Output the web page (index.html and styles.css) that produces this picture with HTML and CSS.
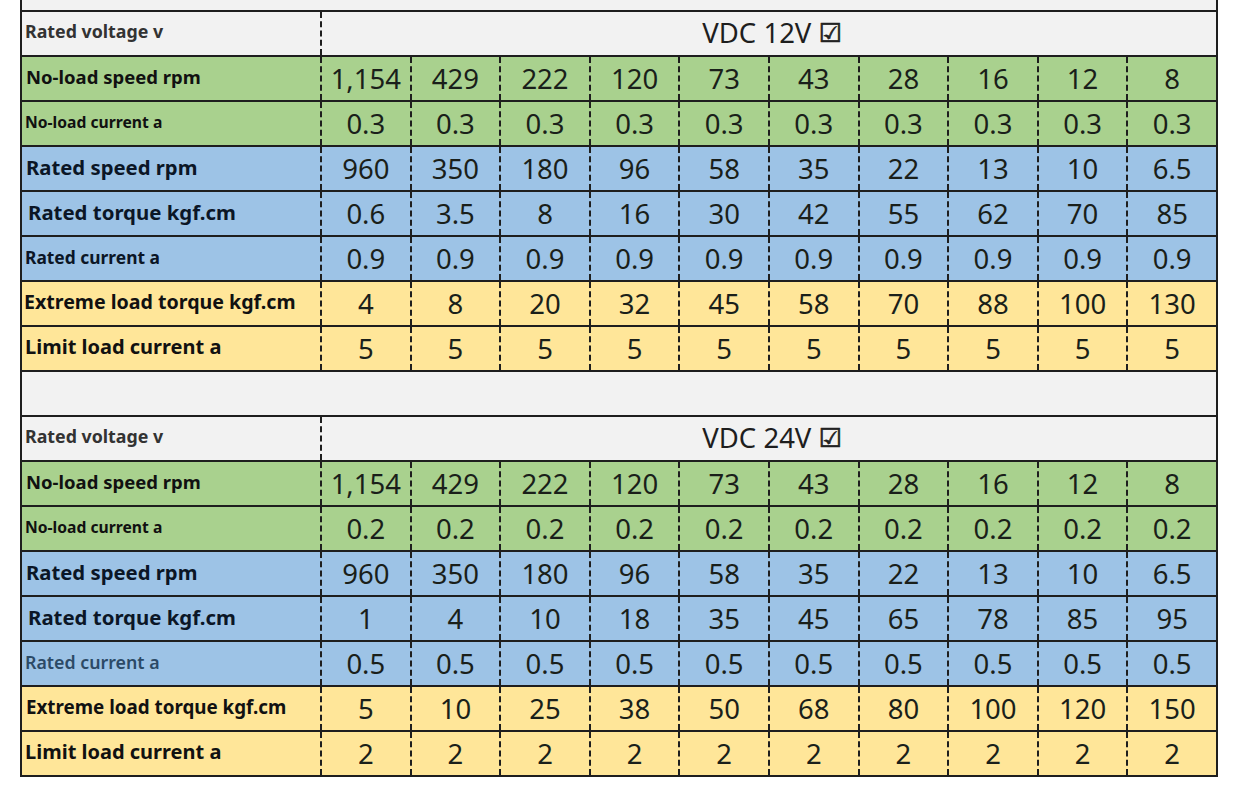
FILE: index.html
```html
<!DOCTYPE html>
<html>
<head>
<meta charset="utf-8">
<link rel="stylesheet" href="styles.css">
</head>
<body>
<div class="sheet">
  <div class="strip"></div>

  <div class="row gray"><div class="label l-volt">Rated voltage v</div><div class="span">VDC 12V <span class="chk">☑</span></div></div>
  <div class="row green"><div class="label l-nls">No-load speed rpm</div><div class="v">1,154</div><div class="v">429</div><div class="v">222</div><div class="v">120</div><div class="v">73</div><div class="v">43</div><div class="v">28</div><div class="v">16</div><div class="v">12</div><div class="v">8</div></div>
  <div class="row green"><div class="label l-nlc">No-load current a</div><div class="v">0.3</div><div class="v">0.3</div><div class="v">0.3</div><div class="v">0.3</div><div class="v">0.3</div><div class="v">0.3</div><div class="v">0.3</div><div class="v">0.3</div><div class="v">0.3</div><div class="v">0.3</div></div>
  <div class="row blue"><div class="label l-rs">Rated speed rpm</div><div class="v">960</div><div class="v">350</div><div class="v">180</div><div class="v">96</div><div class="v">58</div><div class="v">35</div><div class="v">22</div><div class="v">13</div><div class="v">10</div><div class="v">6.5</div></div>
  <div class="row blue"><div class="label l-rt">Rated torque kgf.cm</div><div class="v">0.6</div><div class="v">3.5</div><div class="v">8</div><div class="v">16</div><div class="v">30</div><div class="v">42</div><div class="v">55</div><div class="v">62</div><div class="v">70</div><div class="v">85</div></div>
  <div class="row blue"><div class="label l-rc">Rated current a</div><div class="v">0.9</div><div class="v">0.9</div><div class="v">0.9</div><div class="v">0.9</div><div class="v">0.9</div><div class="v">0.9</div><div class="v">0.9</div><div class="v">0.9</div><div class="v">0.9</div><div class="v">0.9</div></div>
  <div class="row yellow"><div class="label l-ex">Extreme load torque kgf.cm</div><div class="v">4</div><div class="v">8</div><div class="v">20</div><div class="v">32</div><div class="v">45</div><div class="v">58</div><div class="v">70</div><div class="v">88</div><div class="v">100</div><div class="v">130</div></div>
  <div class="row yellow"><div class="label l-lim">Limit load current a</div><div class="v">5</div><div class="v">5</div><div class="v">5</div><div class="v">5</div><div class="v">5</div><div class="v">5</div><div class="v">5</div><div class="v">5</div><div class="v">5</div><div class="v">5</div></div>

  <div class="row gray blank"></div>

  <div class="row gray"><div class="label l-volt">Rated voltage v</div><div class="span">VDC 24V <span class="chk">☑</span></div></div>
  <div class="row green"><div class="label l-nls">No-load speed rpm</div><div class="v">1,154</div><div class="v">429</div><div class="v">222</div><div class="v">120</div><div class="v">73</div><div class="v">43</div><div class="v">28</div><div class="v">16</div><div class="v">12</div><div class="v">8</div></div>
  <div class="row green"><div class="label l-nlc">No-load current a</div><div class="v">0.2</div><div class="v">0.2</div><div class="v">0.2</div><div class="v">0.2</div><div class="v">0.2</div><div class="v">0.2</div><div class="v">0.2</div><div class="v">0.2</div><div class="v">0.2</div><div class="v">0.2</div></div>
  <div class="row blue"><div class="label l-rs">Rated speed rpm</div><div class="v">960</div><div class="v">350</div><div class="v">180</div><div class="v">96</div><div class="v">58</div><div class="v">35</div><div class="v">22</div><div class="v">13</div><div class="v">10</div><div class="v">6.5</div></div>
  <div class="row blue"><div class="label l-rt">Rated torque kgf.cm</div><div class="v">1</div><div class="v">4</div><div class="v">10</div><div class="v">18</div><div class="v">35</div><div class="v">45</div><div class="v">65</div><div class="v">78</div><div class="v">85</div><div class="v">95</div></div>
  <div class="row blue"><div class="label l-rc light">Rated current a</div><div class="v">0.5</div><div class="v">0.5</div><div class="v">0.5</div><div class="v">0.5</div><div class="v">0.5</div><div class="v">0.5</div><div class="v">0.5</div><div class="v">0.5</div><div class="v">0.5</div><div class="v">0.5</div></div>
  <div class="row yellow"><div class="label l-ex2">Extreme load torque kgf.cm</div><div class="v">5</div><div class="v">10</div><div class="v">25</div><div class="v">38</div><div class="v">50</div><div class="v">68</div><div class="v">80</div><div class="v">100</div><div class="v">120</div><div class="v">150</div></div>
  <div class="row yellow"><div class="label l-lim">Limit load current a</div><div class="v">2</div><div class="v">2</div><div class="v">2</div><div class="v">2</div><div class="v">2</div><div class="v">2</div><div class="v">2</div><div class="v">2</div><div class="v">2</div><div class="v">2</div></div>
</div>
</body>
</html>
```

FILE: styles.css
```css
html, body {
  margin: 0;
  padding: 0;
  background: #ffffff;
}

.sheet {
  margin-left: 20px;
  width: 1198px;
  box-sizing: border-box;
  border-left: 2px solid #1e1e1e;
  border-right: 2px solid #1e1e1e;
  font-family: "Noto Sans", "Open Sans", sans-serif;
}

.strip {
  height: 10px;
  background: #f2f2f2;
  border-bottom: 2px solid #1e1e1e;
}

.row {
  display: grid;
  grid-template-columns: 298px repeat(10, 1fr);
  height: 45px;
  box-sizing: border-box;
  border-bottom: 2px solid #1e1e1e;
}

.gray { background: #f2f2f2; }
.green { background: #a9d18e; }
.blue { background: #9dc3e6; }
.yellow { background: #ffe699; }

.blank { display: block; }

.label {
  display: flex;
  align-items: center;
  padding-left: 3px;
  padding-bottom: 3px;
  font-weight: 700;
  color: #111111;
  white-space: nowrap;
}

.l-volt { font-size: 17.8px; color: #333333; padding-bottom: 6px; }
.l-nls { font-size: 18.5px; padding-left: 4px; padding-bottom: 4px; }
.l-nlc { font-size: 15.7px; padding-left: 3px; padding-bottom: 4px; }
.l-rs { font-size: 20.3px; padding-left: 4px; color: #0b1626; }
.l-rt { font-size: 20.4px; padding-left: 6px; color: #0b1626; }
.l-rc { font-size: 17.4px; padding-left: 3px; color: #0b1626; }
.l-rc.light { color: #2c4a66; font-weight: 600; font-size: 17.8px; }
.l-ex { font-size: 19.6px; padding-left: 2px; padding-bottom: 5px; }
.l-ex2 { font-size: 18.8px; padding-left: 4px; }
.l-lim { font-size: 20px; padding-left: 3px; padding-bottom: 5px; }

.span {
  grid-column: 2 / span 10;
  border-left: 2px dashed #1e1e1e;
  display: flex;
  align-items: center;
  justify-content: center;
  padding-left: 6px;
  font-size: 27.5px;
  color: #1e1e1e;
  padding-bottom: 2px;
}

.chk {
  font-family: "DejaVu Sans", sans-serif;
  font-size: 26px;
  margin-left: 7px;
  color: #222222;
  -webkit-text-stroke: 0.7px #222222;
}

.v {
  border-left: 2px dashed #1e1e1e;
  display: flex;
  align-items: center;
  justify-content: center;
  font-size: 27.5px;
  color: #1a1f1a;
  padding-bottom: 1px;
}
```
